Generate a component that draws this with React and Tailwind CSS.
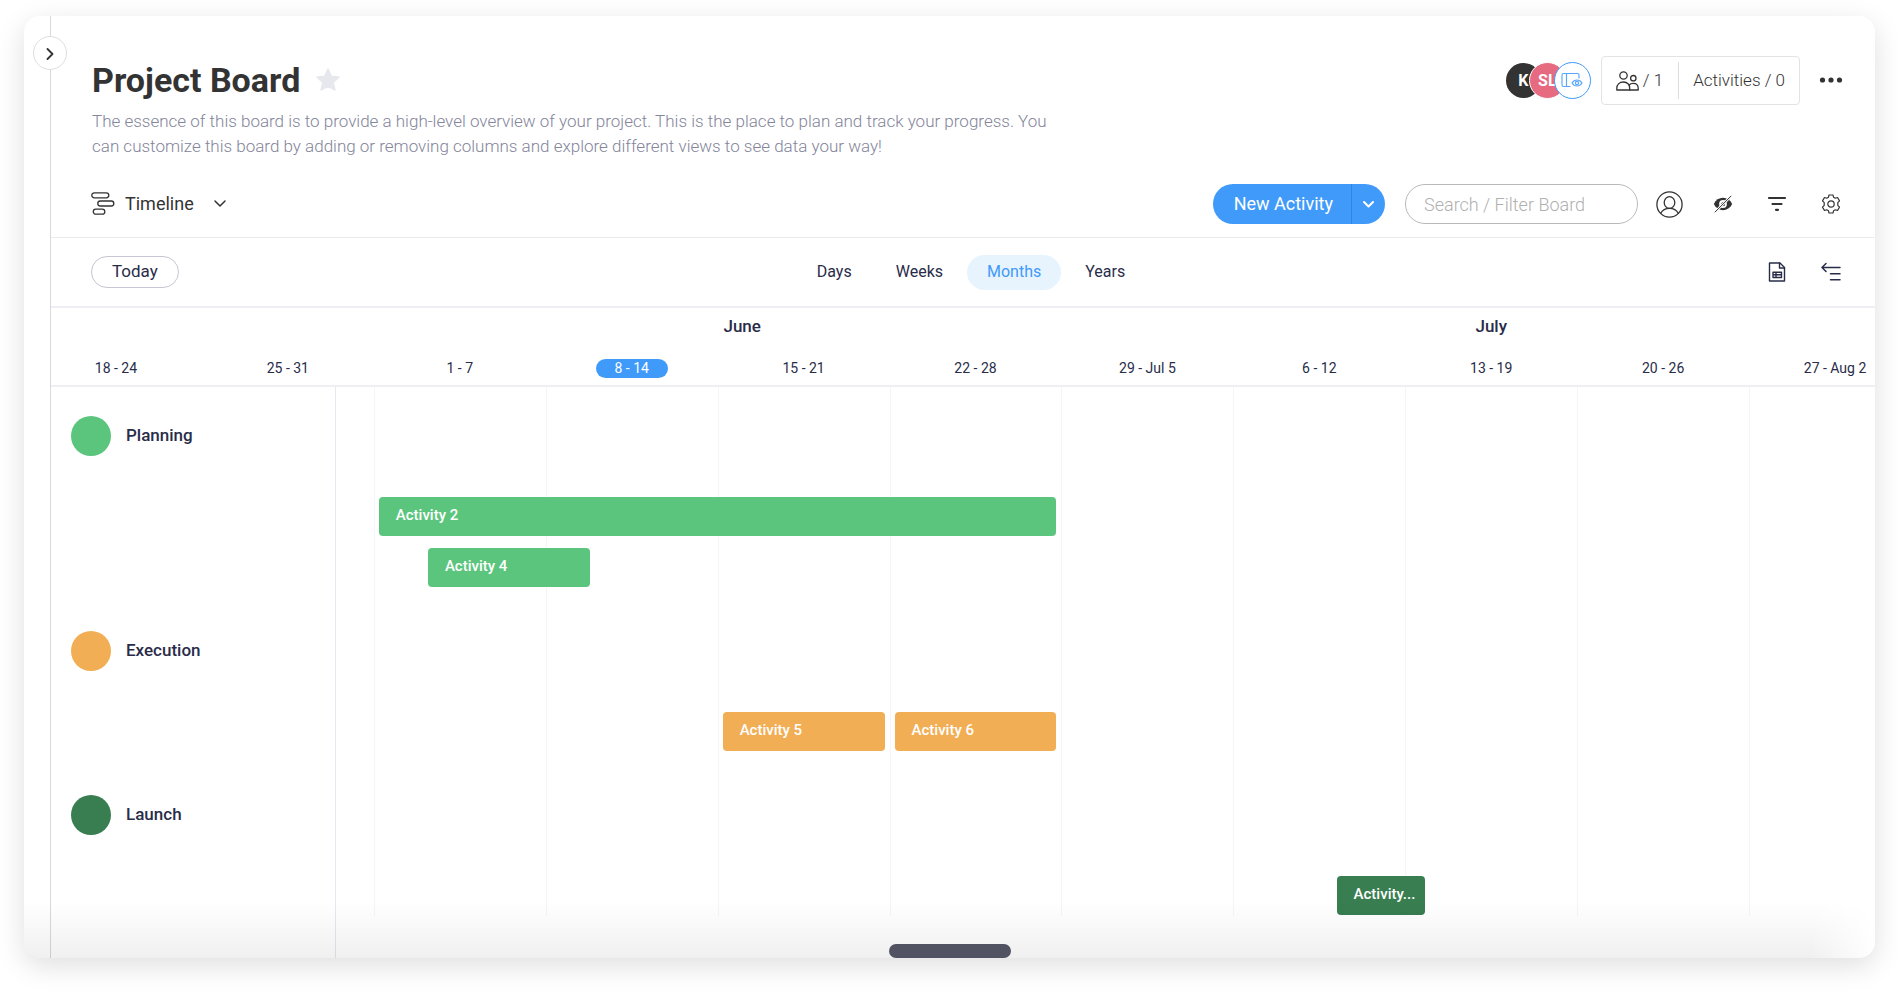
import { useState } from "react";

// Every column of the timeline is one day, counted from May 18
const months = [
  { name: "June", start: 14, days: 30 },
  { name: "July", start: 44, days: 31 },
];

const weeks = [
  "18 - 24",
  "25 - 31",
  "1 - 7",
  "8 - 14",
  "15 - 21",
  "22 - 28",
  "29 - Jul 5",
  "6 - 12",
  "13 - 19",
  "20 - 26",
  "27 - Aug 2",
];

const groups = [
  {
    name: "Planning",
    color: "bg-[#5bc57d]",
    activities: [
      { name: "Activity 2", start: 14, days: 28, row: 1 },
      { name: "Activity 4", start: 16, days: 7, row: 2 },
    ],
  },
  {
    name: "Execution",
    color: "bg-[#f2ae55]",
    activities: [
      { name: "Activity 5", start: 28, days: 7, row: 1 },
      { name: "Activity 6", start: 35, days: 7, row: 1 },
    ],
  },
  {
    name: "Launch",
    color: "bg-[#387e51]",
    activities: [{ name: "Activity...", start: 53, days: 4, row: 1 }],
  },
];

const scales = ["Days", "Weeks", "Months", "Years"];

const span = (item) => ({ gridColumn: `${item.start + 1} / span ${item.days}` });

function Icon({ className, viewBox = "0 0 24 24", strokeWidth = 1.5, children }) {
  return (
    <svg
      className={className}
      viewBox={viewBox}
      fill="none"
      stroke="currentColor"
      strokeWidth={strokeWidth}
      strokeLinecap="round"
      strokeLinejoin="round"
      aria-hidden="true"
    >
      {children}
    </svg>
  );
}

function IconButton({ label, children }) {
  return (
    <button type="button" aria-label={label} className="flex size-8 items-center justify-center">
      {children}
    </button>
  );
}

function Header() {
  return (
    <header className="pt-10 pr-7 pl-[41px]">
      <div className="flex items-center justify-between">
        <div className="flex items-center gap-4 pb-[2px]">
          <h1 className="text-[34px] leading-10 font-bold text-[#333333]">Project Board</h1>
          <button type="button" aria-label="Add to favorites" className="text-[#e6e8ee]">
            <svg className="size-6" viewBox="0 0 24 24" fill="currentColor" stroke="currentColor" strokeWidth="2" strokeLinejoin="round">
              <path d="M12 1.5l3 7 7.6.7-5.7 5.1 1.7 7.4L12 17.8l-6.600 3.900 1.700-7.400L1.400 9.200 9 8.500z" />
            </svg>
          </button>
        </div>

        <div className="flex items-center">
          <div className="flex items-center text-base font-bold text-white">
            <span className="flex size-[35px] items-center justify-center rounded-full bg-[#333333]">K</span>
            <span className="-ml-3 flex size-[37px] items-center justify-center rounded-full border border-white bg-[#e66a80]">
              SL
            </span>
            <button
              type="button"
              aria-label="Board viewers"
              className="-ml-3 flex size-[37px] items-center justify-center rounded-full border border-[#409af9] bg-white text-[#5aa8fa]"
            >
              <Icon className="h-[18px] w-[22px]" viewBox="0 0 22 18" strokeWidth={1.2}>
                <path d="M9 14.500H2.500a1.500 1.500 0 0 1-1.500-1.500V3a1.500 1.500 0 0 1 1.500-1.500h14A1.500 1.500 0 0 1 18 3v3M5.500 1.500v13" />
                <path d="M11 11c2.500-4 7.500-4 10 0-2.500 4-7.500 4-10 0z" />
                <circle cx="16" cy="11" r="1.600" />
              </Icon>
            </button>
          </div>

          <div className="ml-[10px] flex h-[49px] items-center rounded-sm border border-[#e3e3e3] text-[17px] font-light text-[#333333]">
            <button type="button" className="flex h-[37px] items-center gap-1 border-r border-[#dddddd] pr-[15px] pl-[14px]">
              <Icon className="h-5 w-[23px]" viewBox="0 0 23 20" strokeWidth={1.3}>
                <circle cx="7.500" cy="4.500" r="3.700" />
                <path d="M.8 19v-1.500c0-4 2.800-6.500 6.700-6.500s6.200 2.500 6.200 6.500V19z" />
                <circle cx="17.300" cy="7.200" r="2.700" />
                <path d="M13.200 14c1-1.200 2.400-1.700 4.100-1.700 3 0 4.900 1.900 4.900 5V19h-8.500" />
              </Icon>
              <span>/ 1</span>
            </button>
            <button type="button" className="px-[14px]">
              Activities / 0
            </button>
          </div>

          <div className="ml-[15px] pb-[2px]">
            <IconButton label="Board menu">
              <svg className="h-2 w-6" viewBox="0 0 24 8" fill="#333333">
                <circle cx="3.500" cy="4" r="2.600" />
                <circle cx="12" cy="4" r="2.600" />
                <circle cx="20.500" cy="4" r="2.600" />
              </svg>
            </IconButton>
          </div>
        </div>
      </div>

      <p className="mt-1 max-w-[980px] text-[17px] leading-[25px] font-light text-[#83859a]">
        The essence of this board is to provide a high-level overview of your project. This is the place to plan and
        track your progress. You can customize this board by adding or removing columns and explore different views to
        see data your way!
      </p>
    </header>
  );
}

function Toolbar() {
  const [search, setSearch] = useState("");

  return (
    <div className="mt-[25px] flex items-center justify-between border-b border-[#ececee] pr-7 pb-[13px] pl-10 text-[#333333]">
      <button type="button" className="flex items-center">
        <Icon className="size-6" strokeWidth={1.3}>
          <rect x=".8" y=".8" width="17" height="5" rx="2.500" />
          <rect x="6.800" y="9" width="16" height="5" rx="2.500" />
          <rect x="2.300" y="17.200" width="11.500" height="5" rx="2.500" />
        </Icon>
        <span className="ml-[10px] text-lg">Timeline</span>
        <Icon className="ml-5 h-2 w-3" viewBox="0 0 12 8">
          <path d="M1 1l5 5 5-5" />
        </Icon>
      </button>

      <div className="flex items-center">
        <div className="flex h-10 overflow-hidden rounded-full bg-[#409af9] text-white">
          <button type="button" className="pr-[18px] pl-[21px] text-lg">
            New Activity
          </button>
          <button type="button" aria-label="More activity types" className="flex w-[34px] items-center justify-center border-l border-[#2f86e2]">
            <Icon className="h-[7px] w-[11px]" viewBox="0 0 11 7" strokeWidth={2}>
              <path d="M1 1l4.500 4.500L10 1" />
            </Icon>
          </button>
        </div>
        <input
          type="text"
          aria-label="Search / Filter Board"
          placeholder="Search / Filter Board"
          value={search}
          onChange={(e) => setSearch(e.target.value)}
          className="mr-[15px] ml-5 h-10 w-[233px] rounded-full border border-[#b9b9b9] px-[18px] text-lg font-light outline-none placeholder:text-[#b0b0b0]"
        />
        <div className="flex items-center gap-[22px]">
          <IconButton label="Filter by person">
            <Icon className="size-[27px]" viewBox="0 0 27 27" strokeWidth={1.3}>
              <circle cx="13.500" cy="13.500" r="12.600" />
              <ellipse cx="13.500" cy="11.500" rx="5.300" ry="5.900" />
              <path d="M4.800 22.300c1.600-3.200 4.600-4.900 8.700-4.900s7.100 1.700 8.700 4.900" />
            </Icon>
          </IconButton>
          <IconButton label="Hidden columns">
            <svg className="h-[18px] w-5" viewBox="0 0 20 18" aria-hidden="true">
              <path
                d="M.8 9C2.800 5 6 2.800 10 2.800S17.200 5 19.200 9c-2 4-5.200 6.200-9.200 6.200S2.800 13 .8 9z"
                fill="#333333"
              />
              <circle cx="10" cy="9" r="3.900" fill="#ffffff" />
              <path d="M10 6.800A2.200 2.200 0 1 1 7.800 9z" fill="#333333" />
              <path d="M1.800 17.300L18.300.8" stroke="#ffffff" strokeWidth="2.600" />
              <path d="M1.800 17.300L18.300.8" stroke="#333333" strokeWidth="1" />
            </svg>
          </IconButton>
          <IconButton label="Filter">
            <svg className="h-4 w-5" viewBox="0 0 20 16" stroke="#333333" strokeWidth="2.200" strokeLinecap="round" aria-hidden="true">
              <path d="M2 2h16M5.500 8h9M9 13.800h2" />
            </svg>
          </IconButton>
          <IconButton label="Settings">
            <Icon className="size-5" viewBox="0 0 20 20" strokeWidth={1.2}>
              <path d="M8 1h4l.6 2.300 1.600.9 2.300-.7 2 3.400-1.700 1.700v2.800l1.700 1.700-2 3.400-2.300-.7-1.600.9L12 19H8l-.6-2.300-1.600-.9-2.300.7-2-3.400 1.700-1.700V8.600L1.500 6.900l2-3.400 2.300.7 1.600-.9z" />
              <circle cx="10" cy="10" r="3.200" />
            </Icon>
          </IconButton>
        </div>
      </div>
    </div>
  );
}

function ScaleBar() {
  const [scale, setScale] = useState("Months");

  return (
    <div className="grid h-[70px] grid-cols-[1fr_auto_1fr] items-center border-b-2 border-[#eeeef5] text-[#292c49]">
      <div className="pl-10">
        <button type="button" className="h-8 rounded-full border border-[#c5c6d1] px-5 text-[17px]">
          Today
        </button>
      </div>
      <div className="flex gap-1 pl-4">
        {scales.map((name) => (
          <button
            key={name}
            type="button"
            onClick={() => setScale(name)}
            className={
              name === scale
                ? "h-[35px] rounded-full bg-[#e7f4fe] px-5 text-base text-[#409af9]"
                : "h-[35px] rounded-full px-5 text-base"
            }
          >
            {name}
          </button>
        ))}
      </div>
      <div className="flex justify-end gap-[22px] pr-7">
        <IconButton label="Export to Excel">
          <Icon className="h-5 w-[18px]" viewBox="0 0 18 20" strokeWidth={1.4}>
            <path d="M1.500 1h10.500l4.500 4.500V19h-15z" />
            <path d="M11.500 1v5h5" />
            <path d="M5 10.200h8.500v5.300H5zM5 12.800h8.500M8 10.200v5.300" />
          </Icon>
        </IconButton>
        <IconButton label="Unscheduled activities">
          <Icon className="size-5" viewBox="0 0 20 20" strokeWidth={1.5}>
            <path d="M19 5.500H1.500M5 1.500l-4 4 4 4M9.500 11.700H19M9.500 17.700H19" />
          </Icon>
        </IconButton>
      </div>
    </div>
  );
}

function Timeline() {
  return (
    <div className="overflow-hidden text-[#292c49]">
      <div className="border-b-2 border-[#eeeef5]">
        <div className="-mr-[46px] -ml-[21px] grid h-[38px] grid-cols-77 items-center text-center text-[17px] font-medium">
          {months.map((month) => (
            <div key={month.name} style={span(month)}>
              {month.name}
            </div>
          ))}
        </div>
        <div className="mt-[6px] -mr-[46px] -ml-[21px] grid h-[33px] grid-cols-11 items-center justify-items-center text-sm">
          {weeks.map((week) => (
            <div
              key={week}
              className={week === "8 - 14" ? "w-[72px] rounded-full bg-[#409af9] text-center leading-[19px] text-white" : "leading-[19px]"}
            >
              {week}
            </div>
          ))}
        </div>
      </div>

      {/* lines and groups share one grid cell */}
      <div className="grid grid-cols-1">
        <div className="col-start-1 row-start-1 w-[285px] border-r border-[#e6e7ef]" />
        <div className="col-start-1 row-start-1 -mr-[46px] mb-[42px] -ml-[21px] grid grid-cols-11">
          {weeks.slice(2).map((week, i) => (
            <div key={week} className={i === 0 ? "col-start-3 border-l border-[#f5f5f8]" : "border-l border-[#f5f5f8]"} />
          ))}
        </div>
        <div className="col-start-1 row-start-1 flex flex-col gap-11 pt-[29px] pb-[43px]">
          {groups.map((group) => (
            <section key={group.name}>
              <div className="flex h-10 items-center gap-[15px] pl-5">
                <span className={`size-10 rounded-full ${group.color}`} />
                <h2 className="text-[17px] font-medium">{group.name}</h2>
              </div>
              <div className="mt-[41px] -mr-[46px] -ml-[21px] grid grid-cols-77 gap-y-3">
                {group.activities.map((activity) => (
                  <button
                    key={activity.name}
                    type="button"
                    className={`mx-[5px] h-[39px] overflow-hidden rounded-sm pb-[2px] pl-[17px] text-left text-[15px] font-medium whitespace-nowrap text-white ${group.color}`}
                    style={{ ...span(activity), gridRow: activity.row }}
                  >
                    {activity.name}
                  </button>
                ))}
              </div>
            </section>
          ))}
        </div>
      </div>
    </div>
  );
}

export default function App() {
  return (
    <div className="bg-white px-6 pt-4 pb-8 font-[Roboto,sans-serif]">
      <div className="relative flex overflow-hidden rounded-2xl bg-white shadow-[0_8px_28px_rgba(0,0,0,0.13)]">
        <div className="w-[27px] shrink-0 border-r border-[#d9d9d9]" />
        <button
          type="button"
          aria-label="Expand sidebar"
          className="absolute top-5 left-[9px] z-10 flex size-[34px] items-center justify-center rounded-full border border-[#dedede] bg-white pt-[2px] text-[#333333]"
        >
          <Icon className="h-3 w-2" viewBox="0 0 8 12" strokeWidth={1.8}>
            <path d="M1.500 1l5 5-5 5" />
          </Icon>
        </button>

        <main className="min-w-0 flex-1">
          <Header />
          <Toolbar />
          <ScaleBar />
          <Timeline />
        </main>

        <div className="pointer-events-none absolute inset-x-0 bottom-0 h-14 bg-linear-to-t from-black/6 to-transparent mask-r-from-[calc(100%-64px)]" />
        <div className="absolute bottom-0 left-1/2 h-[14px] w-[122px] -translate-x-1/2 rounded-full bg-[#515362]" />
      </div>
    </div>
  );
}
